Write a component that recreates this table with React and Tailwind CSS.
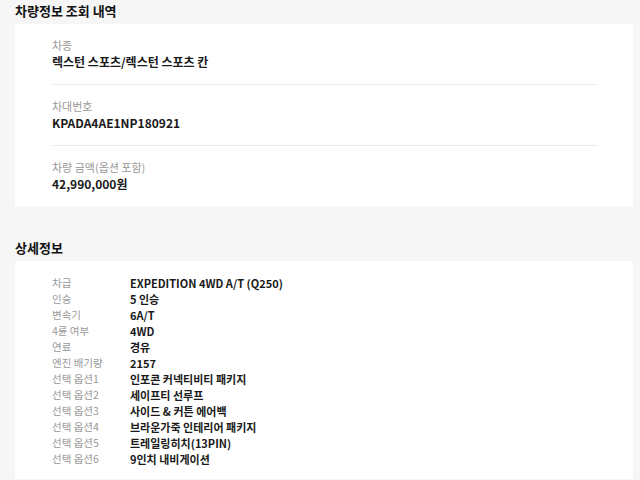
const summary = [
  { label: '차종', value: '렉스턴 스포츠/렉스턴 스포츠 칸' },
  { label: '차대번호', value: 'KPADA4AE1NP180921' },
  { label: '차량 금액(옵션 포함)', value: '42,990,000원' },
]

const details = [
  ['차급', 'EXPEDITION 4WD A/T (Q250)'],
  ['인승', '5 인승'],
  ['변속기', '6A/T'],
  ['4륜 여부', '4WD'],
  ['연료', '경유'],
  ['엔진 배기량', '2157'],
  ['선택 옵션1', '인포콘 커넥티비티 패키지'],
  ['선택 옵션2', '세이프티 선루프'],
  ['선택 옵션3', '사이드 & 커튼 에어백'],
  ['선택 옵션4', '브라운가죽 인테리어 패키지'],
  ['선택 옵션5', '트레일링히치(13PIN)'],
  ['선택 옵션6', '9인치 내비게이션'],
]

export default function App() {
  return (
    <div
      className="min-h-[480px] bg-[#f6f6f6] pl-[15px] pr-[7px] pt-[2px] text-[#222]"
      style={{ fontFamily: '"Noto Sans CJK KR", "Noto Sans", sans-serif' }}
    >
      <h2 className="mb-[4px] text-[13px] font-bold leading-[18px] text-[#111]">차량정보 조회 내역</h2>
      <section className="bg-white pl-[37px] pr-[35px]">
        {summary.map((item, i) => (
          <div
            key={item.label}
            className={`py-[13px] ${i < summary.length - 1 ? 'border-b border-[#ececec]' : ''}`}
          >
            <p className="text-[11px] leading-[16px] text-[#999]">{item.label}</p>
            <p className="text-[12px] font-bold leading-[18px] text-[#1a1a1a]">{item.value}</p>
          </div>
        ))}
      </section>

      <h2 className="mb-[4px] mt-[33px] text-[13px] font-bold leading-[18px] text-[#111]">상세정보</h2>
      <section className="bg-white pb-[12px] pl-[37px] pt-[14px]">
        {details.map(([label, value]) => (
          <div key={label} className="flex leading-[16px]">
            <span className="w-[78px] shrink-0 text-[10.5px] text-[#999]">{label}</span>
            <span className="text-[11px] font-bold text-[#1a1a1a]">{value}</span>
          </div>
        ))}
      </section>
    </div>
  )
}
